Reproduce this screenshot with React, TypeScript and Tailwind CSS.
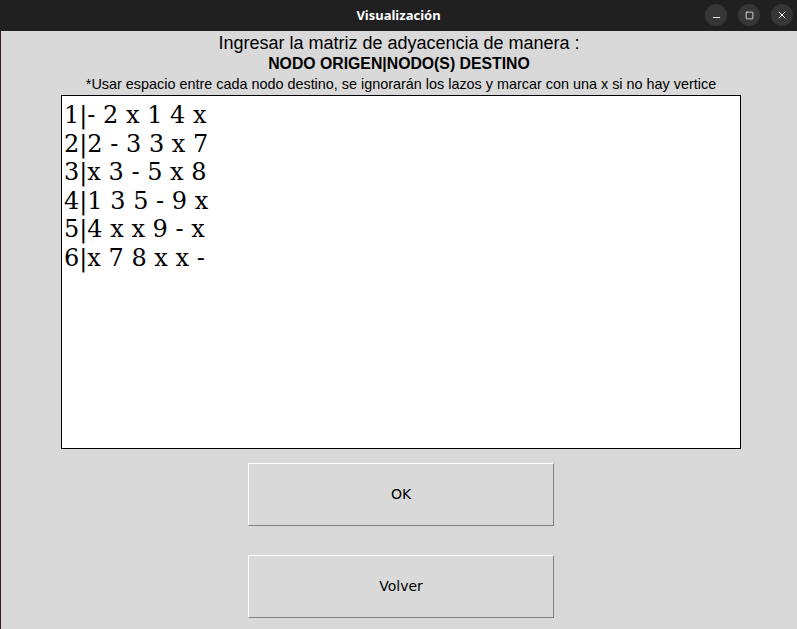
import { Minus, Square, X } from "lucide-react";

const rows = [
  "1|- 2 x 1 4 x",
  "2|2 - 3 3 x 7",
  "3|x 3 - 5 x 8",
  "4|1 3 5 - 9 x",
  "5|4 x x 9 - x",
  "6|x 7 8 x x -",
];

function WinButton({ children }: { children: React.ReactNode }) {
  return (
    <span className="flex h-[22px] w-[22px] items-center justify-center rounded-full bg-[#363636] text-white">
      {children}
    </span>
  );
}

export default function App() {
  return (
    <div className="flex h-[629px] w-[797px] flex-col overflow-hidden bg-[#d9d9d9]">
      <header className="relative flex h-[31px] shrink-0 items-center justify-center bg-[#202020]">
        <span className="text-[13px] font-bold text-white [font-family:'Noto_Sans',sans-serif]">
          Visualización
        </span>
        <div className="absolute right-[4px] top-[4px] flex items-center gap-[11px]">
          <WinButton>
            <Minus size={11} strokeWidth={2} className="mt-[4px]" />
          </WinButton>
          <WinButton>
            <Square size={9} strokeWidth={2} />
          </WinButton>
          <WinButton>
            <X size={12} strokeWidth={2} />
          </WinButton>
        </div>
      </header>

      <main className="flex flex-1 flex-col items-center border-l border-[#3a1a1e] [font-family:'Liberation_Sans',Arial,sans-serif] text-black">
        <p className="mt-[1px] text-[18px] leading-[22px]">
          Ingresar la matriz de adyacencia de manera :
        </p>
        <p className="mt-[1px] text-[15.8px] font-bold leading-[18px]">
          NODO ORIGEN|NODO(S) DESTINO
        </p>
        <p className="mt-[2px] ml-[4px] text-[14.4px] leading-[18px]">
          *Usar espacio entre cada nodo destino, se ignorarán los lazos y marcar con una x si no hay vertice
        </p>

        <div className="ml-[4px] mt-[2px] h-[354px] w-[680px] border border-black bg-white px-[2px] pt-[5px] [font-family:'DejaVu_Serif',serif] text-[24px] leading-[28.6px]">
          {rows.map((r) => (
            <div key={r} className="whitespace-pre">
              {r}
            </div>
          ))}
        </div>

        <div className="ml-[4px] mt-[14px] flex flex-col gap-[29px] [font-family:'DejaVu_Sans',sans-serif] text-[14px]">
          <button className="h-[63px] w-[306px] border border-b-[#808080] border-l-white border-r-[#808080] border-t-white bg-[#d9d9d9]">
            OK
          </button>
          <button className="h-[63px] w-[306px] border border-b-[#808080] border-l-white border-r-[#808080] border-t-white bg-[#d9d9d9]">
            Volver
          </button>
        </div>
      </main>
    </div>
  );
}
